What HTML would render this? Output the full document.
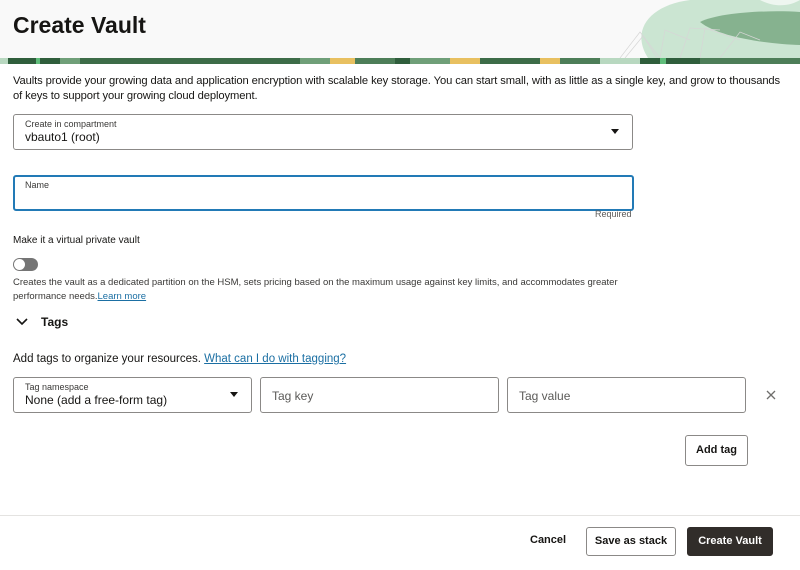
<!DOCTYPE html>
<html><head><style>
body{margin:0;width:800px;height:570px;overflow:hidden;background:#fff;font-family:"Liberation Sans",sans-serif;color:#161513;position:relative}
.hdr{position:absolute;left:0;top:0;width:800px;height:58px;background:#f9f9f9;overflow:hidden}
.strip{position:absolute;left:0;top:58px;width:800px;height:6px;background:linear-gradient(90deg,#b8d8c0 0 8px,#2f5e3c 8px 36px,#5fbd7a 36px 40px,#2f5e3c 40px 60px,#6f9f78 60px 80px,#3d6c48 80px 300px,#6f9f78 300px 330px,#e8c060 330px 355px,#4d7e58 355px 395px,#2f5e3c 395px 410px,#6f9f78 410px 450px,#e8c060 450px 480px,#3d6c48 480px 540px,#e8c060 540px 560px,#4d7e58 560px 600px,#b8d8c0 600px 640px,#2f5e3c 640px 660px,#5fbd7a 660px 666px,#2f5e3c 666px 700px,#4d7e58 700px 800px)}
h1{position:absolute;left:13px;top:12px;margin:0;font-size:23px;font-weight:bold}
.p{position:absolute;left:13px;font-size:11.5px;line-height:15px;color:#161513}
.field{position:absolute;border:1px solid #8b8987;border-radius:3px;background:#fff}
.lbl{position:absolute;left:11px;top:4px;font-size:9px;color:#3a3937}
.val{position:absolute;left:11px;top:15px;font-size:12px}
.caret{position:absolute;width:0;height:0;border-left:4px solid transparent;border-right:4px solid transparent;border-top:5px solid #161513}
.ph{position:absolute;left:11px;top:11px;font-size:12px;color:#5b5a58}
a{color:#1b6fa3;text-decoration:underline}
.btn{position:absolute;border:1px solid #8b8987;border-radius:3px;font-size:11px;font-weight:bold;text-align:center;background:#fff}
</style></head><body>
<div class="hdr">
<svg width="800" height="58" style="position:absolute;left:0;top:0">
<path d="M648 58 C630 30 650 5 690 0 L800 0 L800 58 Z" fill="#cbe5d2"/>
<path d="M700 22 C720 12 770 10 800 12 L800 45 C770 44 720 38 700 22 Z" fill="#86b28f"/>
<path d="M760 0 C775 8 790 6 800 0 Z" fill="#eef6f0"/>
<g stroke="#d6d6d6" stroke-width="0.7" fill="none">
<path d="M620 58 L640 32 L660 58 M625 58 L643 36 L657 58 M660 58 L665 30 L690 40 M680 58 L690 28 L720 30 M700 58 L705 28 L740 40 M720 58 L740 32 L760 40"/>
</g>
</svg>
</div>
<div class="strip"></div>
<h1>Create Vault</h1>
<div class="p" style="top:74px;width:775px;font-size:11.2px;letter-spacing:-0.1px">Vaults provide your growing data and application encryption with scalable key storage. You can start small, with as little as a single key, and grow to thousands of keys to support your growing cloud deployment.</div>
<div class="field" style="left:13px;top:114px;width:618px;height:34px"><div class="lbl">Create in compartment</div><div class="val" style="top:15px">vbauto1 (root)</div><div class="caret" style="left:597px;top:14px"></div></div>
<div class="field" style="left:13px;top:175px;width:617px;height:32px;border:2px solid #227ab6"><div class="lbl" style="left:10px;top:3px">Name</div></div>
<div style="position:absolute;left:595px;top:209px;font-size:9px;color:#5b5a58">Required</div>
<div class="p" style="top:233px;font-size:10px">Make it a virtual private vault</div>
<div style="position:absolute;left:13px;top:258px;width:25px;height:13px;border-radius:7px;background:#757575"><div style="position:absolute;left:1px;top:1px;width:11px;height:11px;border-radius:6px;background:#fff"></div></div>
<div class="p" style="top:276px;font-size:9.5px;line-height:13.5px;width:620px;color:#3a3937">Creates the vault as a dedicated partition on the HSM, sets pricing based on the maximum usage against key limits, and accommodates greater performance needs.<a>Learn more</a></div>
<svg style="position:absolute;left:16px;top:318px" width="12" height="8"><path d="M1 1 L6 6 L11 1" stroke="#161513" stroke-width="1.6" fill="none"/></svg>
<div style="position:absolute;left:41px;top:315px;font-size:12px;font-weight:bold">Tags</div>
<div class="p" style="top:352px">Add tags to organize your resources. <a>What can I do with tagging?</a></div>
<div class="field" style="left:13px;top:377px;width:237px;height:34px"><div class="lbl">Tag namespace</div><div class="val" style="top:15px">None (add a free-form tag)</div><div class="caret" style="left:216px;top:14px"></div></div>
<div class="field" style="left:260px;top:377px;width:237px;height:34px"><div class="ph">Tag key</div></div>
<div class="field" style="left:507px;top:377px;width:237px;height:34px"><div class="ph">Tag value</div></div>
<svg style="position:absolute;left:766px;top:390px" width="10" height="10"><path d="M1 1 L9 9 M9 1 L1 9" stroke="#6f6e6c" stroke-width="1.3"/></svg>
<div class="btn" style="left:685px;top:435px;width:61px;height:29px;line-height:29px">Add tag</div>
<div style="position:absolute;left:0;top:515px;width:800px;height:1px;background:#e4e3e1"></div>
<div style="position:absolute;left:530px;top:534px;font-size:11px;font-weight:bold">Cancel</div>
<div class="btn" style="left:586px;top:527px;width:88px;height:27px;line-height:27px">Save as stack</div>
<div class="btn" style="left:687px;top:527px;width:84px;height:27px;line-height:27px;background:#312d2a;border-color:#312d2a;color:#fff">Create Vault</div>
</body></html>
